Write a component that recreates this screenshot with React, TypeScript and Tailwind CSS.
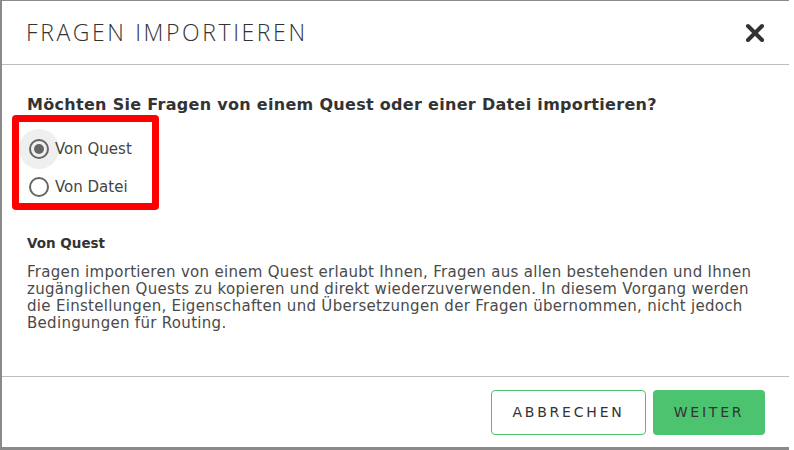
import React from "react";

const sans = { fontFamily: '"DejaVu Sans", "Open Sans", sans-serif' };
const light = { fontFamily: '"Open Sans", "Liberation Sans", sans-serif' };

function Radio({ label, checked }: { label: string; checked?: boolean }) {
  return (
    <label className="flex items-center h-[38px] cursor-pointer">
      <span
        className={`w-[40px] h-[40px] rounded-full flex items-center justify-center shrink-0 ${
          checked ? "bg-[#efefef]" : ""
        }`}
      >
        <span className="w-[20px] h-[20px] rounded-full border-2 border-[#666] flex items-center justify-center">
          {checked && <span className="w-[10px] h-[10px] rounded-full bg-[#666]" />}
        </span>
      </span>
      <span className="ml-[-4px] text-[15px] text-[#444]">{label}</span>
    </label>
  );
}

export default function App() {
  return (
    <div className="w-[794px] h-[450px] bg-white overflow-hidden" style={sans}>
      <div className="w-[789px] h-[450px] bg-[#8a8a8a] pl-[2px] pt-[1px] pb-[3px] flex">
        <div className="flex-1 bg-white flex flex-col">
          {/* header */}
          <div className="h-[64px] shrink-0 pl-[24px] pr-[24px] flex items-center justify-between border-b border-[#bdbdbd]">
            <h1 className="text-[23px] font-light text-[#333] tracking-[2.6px]" style={light}>
              FRAGEN IMPORTIEREN
            </h1>
            <button className="w-[20px] h-[20px] flex items-center justify-center">
              <svg width="20" height="20" viewBox="0 0 20 20">
                <path d="M3 3 L17 17 M17 3 L3 17" stroke="#333" strokeWidth="4" strokeLinecap="round" />
              </svg>
            </button>
          </div>

          {/* body */}
          <div className="flex-1 pl-[25px] pr-[20px] pt-[28px]">
            <p className="text-[16px] font-bold text-[#333] leading-[24px] tracking-[0.3px]">
              Möchten Sie Fragen von einem Quest oder einer Datei importieren?
            </p>
            <div className="ml-[-15px] mt-[-2px] w-[147px] h-[95px] border-[7px] border-[#ff0000] rounded-[4px] pt-[8px]">
              <Radio label="Von Quest" checked />
              <Radio label="Von Datei" />
            </div>

            <h2 className="mt-[23px] text-[13.5px] font-bold text-[#333] leading-[20px]">Von Quest</h2>
            <p className="mt-[11px] text-[15px] text-[#4a4a4a] leading-[17px] tracking-[0.3px] whitespace-nowrap">
              Fragen importieren von einem Quest erlaubt Ihnen, Fragen aus allen bestehenden und Ihnen
              <br />
              zugänglichen Quests zu kopieren und direkt wiederzuverwenden. In diesem Vorgang werden
              <br />
              die Einstellungen, Eigenschaften und Übersetzungen der Fragen übernommen, nicht jedoch
              <br />
              Bedingungen für Routing.
            </p>
          </div>

          {/* footer */}
          <div className="h-[71px] shrink-0 border-t border-[#bdbdbd] flex justify-end items-start pt-[13px] pr-[24px] gap-[7px]">
            <button className="w-[155px] h-[45px] border border-[#4cc46f] rounded-[4px] text-[14px] tracking-[2.8px] text-[#333] bg-white">
              ABBRECHEN
            </button>
            <button className="w-[112px] h-[45px] rounded-[4px] bg-[#4cc46f] text-[14px] tracking-[2.8px] text-[#333]">
              WEITER
            </button>
          </div>
        </div>
      </div>
    </div>
  );
}
